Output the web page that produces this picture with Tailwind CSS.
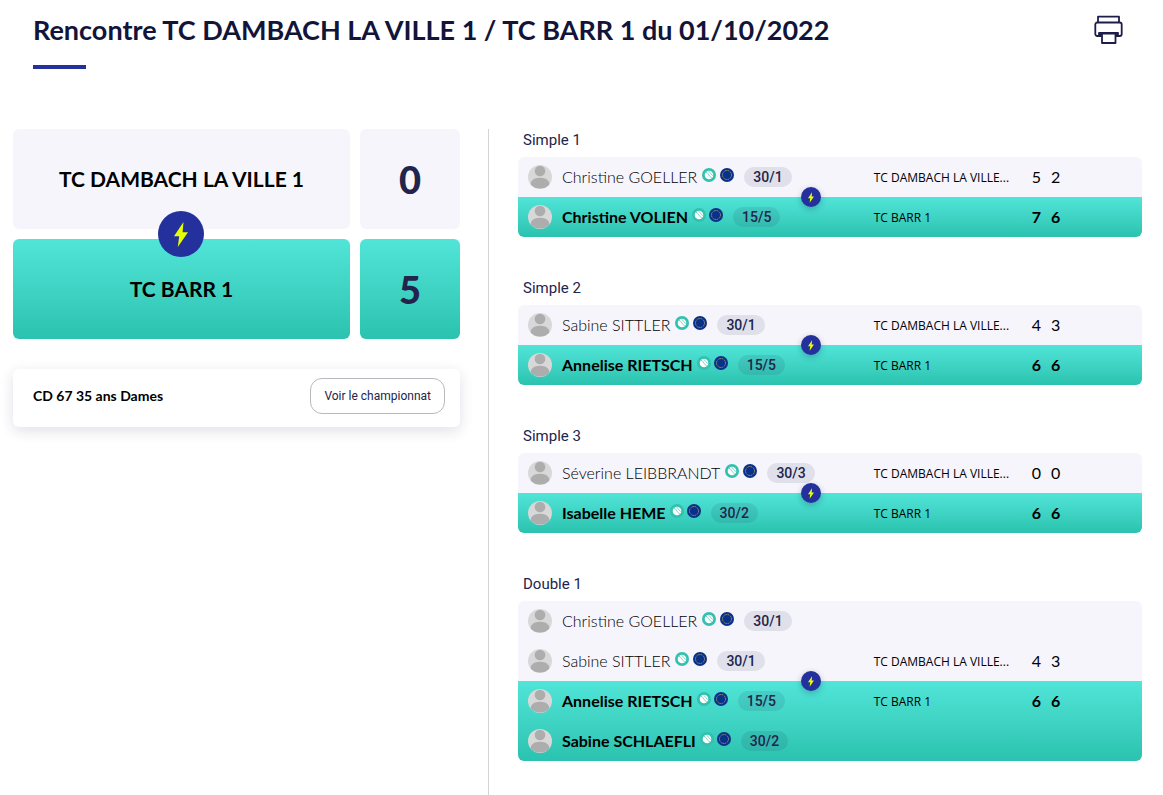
<!DOCTYPE html>
<html lang="fr">
<head>
<meta charset="utf-8">
<meta name="viewport" content="width=device-width, initial-scale=1">
<title>Rencontre TC DAMBACH LA VILLE 1 / TC BARR 1</title>
<script src="https://cdn.jsdelivr.net/npm/@tailwindcss/browser@4"></script>
</head>
<body class="overflow-x-hidden bg-white font-['Lato',sans-serif] text-black">

<svg class="hidden" aria-hidden="true">
  <symbol id="avatar" viewBox="0 0 24 24">
    <rect width="24" height="24" fill="#d8d8d8"/>
    <circle cx="12" cy="6" r="5.300" fill="#adadad"/>
    <path d="M2.500 20c0-4.500 3.500-7.300 9.500-7.300s9.500 2.800 9.500 7.300c-2.500 2.500-6 3.400-9.500 3.400S5 22.500 2.500 20z" fill="#adadad"/>
  </symbol>
  <symbol id="ball" viewBox="0 0 14 14">
    <circle cx="7" cy="7" r="7" fill="#33c0ae"/>
    <circle cx="7" cy="7" r="4.300" fill="#fff"/>
    <path d="M4 4.200c1.800.6 2 1.800 2.800 2.900s2 1.400 2.700 3M6.600 3c.6 1.200 1.500 1.500 2.100 2.500s1.200 1.500 2.100 2" fill="none" stroke="#33c0ae" stroke-width=".7"/>
  </symbol>
  <symbol id="europe" viewBox="0 0 14 14">
    <circle cx="7" cy="7" r="7" fill="#0a3189"/>
    <circle cx="7" cy="7" r="4.500" fill="none" stroke="#8f8f68" stroke-width="1" stroke-dasharray="1.600 .756"/>
  </symbol>
  <symbol id="bolt" viewBox="0 0 14 25">
    <path d="M9.500 0 0 14.200h5.200L3.800 25 14 10.200H8.600L9.500 0z" fill="#e6ff00"/>
  </symbol>
</svg>

<header class="flex items-start justify-between pl-[33px] pr-10 pt-3">
  <div>
    <h1 class="text-[27px] leading-9 font-bold text-[#12143a]">Rencontre TC DAMBACH LA VILLE 1 / TC BARR 1 du 01/10/2022</h1>
    <div class="mt-[17px] h-1 w-[53px] bg-[#24309c]"></div>
  </div>
  <button type="button" aria-label="Imprimer" class="mt-[3px]">
    <svg class="size-[29px]" viewBox="0 0 29 29" fill="none" stroke="#1d1d4b" stroke-width="1.800" stroke-linejoin="round">
      <path d="M4 7.500V1.700h21v5.800"/>
      <path d="M7.500 21H3.300a2 2 0 0 1-2-2V9.500a2 2 0 0 1 2-2h22.400a2 2 0 0 1 2 2V19a2 2 0 0 1-2 2H21"/>
      <path d="M5 18h19v1.500H5z" fill="#1d1d4b"/>
      <path d="M8 18.500h13.500V28H8z" fill="#fff"/>
    </svg>
  </button>
</header>

<main class="ml-[13px] mr-[10px] mt-15 grid grid-cols-[5fr_7fr]">

  <section class="pr-7">
    <div class="relative grid grid-cols-[1fr_100px] grid-rows-[100px_100px] gap-[10px] text-center">
      <div class="flex items-center justify-center rounded-md bg-[#f6f5fc] text-[21px] font-bold">TC DAMBACH LA VILLE 1</div>
      <div class="flex items-center justify-center rounded-md bg-[#f6f5fc] text-[38px] font-black text-[#22244b]">0</div>
      <div class="flex items-center justify-center rounded-md bg-linear-to-b from-[#50e5d8] to-[#2bc2af] text-[21px] font-bold">TC BARR 1</div>
      <div class="flex items-center justify-center rounded-md bg-linear-to-b from-[#50e5d8] to-[#2bc2af] text-[38px] font-black text-[#22244b]">5</div>
      <span class="absolute left-[calc(50%-56px)] top-1/2 flex size-[46px] -translate-x-1/2 -translate-y-1/2 items-center justify-center rounded-full bg-[#24309c]"><svg class="h-[25px] w-[14px]"><use href="#bolt"/></svg></span>
    </div>
    <div class="mt-[30px] flex items-start justify-between rounded-md pt-[9px] pl-5 pr-[15px] pb-[13px] shadow-[0_4px_14px_rgba(34,36,90,0.14)]">
      <p class="py-2 text-sm font-bold">CD 67 35 ans Dames</p>
      <button type="button" class="h-9 rounded-xl border border-[#b9b9bd] px-[13px] font-['Roboto',sans-serif] text-xs text-[#22244b]">Voir le championnat</button>
    </div>
  </section>

  <section class="flex min-h-[666px] flex-col gap-10 border-l border-[#d4d4d8] pl-[29px] pr-[11px]">

    <article>
      <h2 class="mb-[6px] pl-[5px] font-['Roboto',sans-serif] text-[15px] leading-[22px] text-[#22244b]">Simple 1</h2>
      <div class="relative">
        <div class="overflow-hidden rounded-md">
          <table class="w-full table-fixed border-collapse">
            <colgroup><col class="w-[57%]"><col class="w-[25%]"><col></colgroup>
            <tbody class="bg-[#f6f5fc]">
              <tr class="h-10">
                <td class="p-0"><div class="flex items-center pl-[10px] font-light"><svg class="mr-[10px] size-6 rounded-full"><use href="#avatar"/></svg>Christine GOELLER<svg class="mb-1 ml-[5px] size-[14px]"><use href="#ball"/></svg><svg class="mb-1 ml-1 size-[14px]"><use href="#europe"/></svg><span class="ml-[10px] rounded-full bg-[#22244b]/10 px-[9px] font-['Roboto',sans-serif] text-sm font-medium text-[#22244b]">30/1</span></div></td>
                <td class="p-0 pt-[2px] font-['Open_Sans',sans-serif] text-xs">TC DAMBACH LA VILLE...</td>
                <td class="p-0"><div class="flex gap-[10px] pl-[2px] font-normal"><span>5</span><span>2</span></div></td>
              </tr>
            </tbody>
            <tbody class="bg-linear-to-b from-[#50e5d8] to-[#2bc2af]">
              <tr class="h-10">
                <td class="p-0"><div class="flex items-center pl-[10px] font-bold"><svg class="mr-[10px] size-6 rounded-full"><use href="#avatar"/></svg>Christine VOLIEN<svg class="mb-1 ml-1 size-[14px]"><use href="#ball"/></svg><svg class="mb-1 ml-[3px] size-[14px]"><use href="#europe"/></svg><span class="ml-[10px] rounded-full bg-[#22244b]/10 px-[9px] font-['Roboto',sans-serif] text-sm font-medium text-[#22244b]">15/5</span></div></td>
                <td class="p-0 pt-[2px] font-['Open_Sans',sans-serif] text-xs">TC BARR 1</td>
                <td class="p-0"><div class="flex gap-[10px] pl-[2px] font-bold"><span>7</span><span>6</span></div></td>
              </tr>
            </tbody>
          </table>
        </div>
        <span class="absolute left-[47%] top-1/2 flex size-5 -translate-x-1/2 -translate-y-1/2 items-center justify-center rounded-full bg-[#24309c] shadow-[0_2px_6px_rgba(34,36,90,0.3)]"><svg class="h-[11px] w-[6px]"><use href="#bolt"/></svg></span>
      </div>
    </article>

    <article>
      <h2 class="mb-[6px] pl-[5px] font-['Roboto',sans-serif] text-[15px] leading-[22px] text-[#22244b]">Simple 2</h2>
      <div class="relative">
        <div class="overflow-hidden rounded-md">
          <table class="w-full table-fixed border-collapse">
            <colgroup><col class="w-[57%]"><col class="w-[25%]"><col></colgroup>
            <tbody class="bg-[#f6f5fc]">
              <tr class="h-10">
                <td class="p-0"><div class="flex items-center pl-[10px] font-light"><svg class="mr-[10px] size-6 rounded-full"><use href="#avatar"/></svg>Sabine SITTLER<svg class="mb-1 ml-[5px] size-[14px]"><use href="#ball"/></svg><svg class="mb-1 ml-1 size-[14px]"><use href="#europe"/></svg><span class="ml-[10px] rounded-full bg-[#22244b]/10 px-[9px] font-['Roboto',sans-serif] text-sm font-medium text-[#22244b]">30/1</span></div></td>
                <td class="p-0 pt-[2px] font-['Open_Sans',sans-serif] text-xs">TC DAMBACH LA VILLE...</td>
                <td class="p-0"><div class="flex gap-[10px] pl-[2px] font-normal"><span>4</span><span>3</span></div></td>
              </tr>
            </tbody>
            <tbody class="bg-linear-to-b from-[#50e5d8] to-[#2bc2af]">
              <tr class="h-10">
                <td class="p-0"><div class="flex items-center pl-[10px] font-bold"><svg class="mr-[10px] size-6 rounded-full"><use href="#avatar"/></svg>Annelise RIETSCH<svg class="mb-1 ml-1 size-[14px]"><use href="#ball"/></svg><svg class="mb-1 ml-[3px] size-[14px]"><use href="#europe"/></svg><span class="ml-[10px] rounded-full bg-[#22244b]/10 px-[9px] font-['Roboto',sans-serif] text-sm font-medium text-[#22244b]">15/5</span></div></td>
                <td class="p-0 pt-[2px] font-['Open_Sans',sans-serif] text-xs">TC BARR 1</td>
                <td class="p-0"><div class="flex gap-[10px] pl-[2px] font-bold"><span>6</span><span>6</span></div></td>
              </tr>
            </tbody>
          </table>
        </div>
        <span class="absolute left-[47%] top-1/2 flex size-5 -translate-x-1/2 -translate-y-1/2 items-center justify-center rounded-full bg-[#24309c] shadow-[0_2px_6px_rgba(34,36,90,0.3)]"><svg class="h-[11px] w-[6px]"><use href="#bolt"/></svg></span>
      </div>
    </article>

    <article>
      <h2 class="mb-[6px] pl-[5px] font-['Roboto',sans-serif] text-[15px] leading-[22px] text-[#22244b]">Simple 3</h2>
      <div class="relative">
        <div class="overflow-hidden rounded-md">
          <table class="w-full table-fixed border-collapse">
            <colgroup><col class="w-[57%]"><col class="w-[25%]"><col></colgroup>
            <tbody class="bg-[#f6f5fc]">
              <tr class="h-10">
                <td class="p-0"><div class="flex items-center pl-[10px] font-light"><svg class="mr-[10px] size-6 rounded-full"><use href="#avatar"/></svg>Séverine LEIBBRANDT<svg class="mb-1 ml-[5px] size-[14px]"><use href="#ball"/></svg><svg class="mb-1 ml-1 size-[14px]"><use href="#europe"/></svg><span class="ml-[10px] rounded-full bg-[#22244b]/10 px-[9px] font-['Roboto',sans-serif] text-sm font-medium text-[#22244b]">30/3</span></div></td>
                <td class="p-0 pt-[2px] font-['Open_Sans',sans-serif] text-xs">TC DAMBACH LA VILLE...</td>
                <td class="p-0"><div class="flex gap-[10px] pl-[2px] font-normal"><span>0</span><span>0</span></div></td>
              </tr>
            </tbody>
            <tbody class="bg-linear-to-b from-[#50e5d8] to-[#2bc2af]">
              <tr class="h-10">
                <td class="p-0"><div class="flex items-center pl-[10px] font-bold"><svg class="mr-[10px] size-6 rounded-full"><use href="#avatar"/></svg>Isabelle HEME<svg class="mb-1 ml-1 size-[14px]"><use href="#ball"/></svg><svg class="mb-1 ml-[3px] size-[14px]"><use href="#europe"/></svg><span class="ml-[10px] rounded-full bg-[#22244b]/10 px-[9px] font-['Roboto',sans-serif] text-sm font-medium text-[#22244b]">30/2</span></div></td>
                <td class="p-0 pt-[2px] font-['Open_Sans',sans-serif] text-xs">TC BARR 1</td>
                <td class="p-0"><div class="flex gap-[10px] pl-[2px] font-bold"><span>6</span><span>6</span></div></td>
              </tr>
            </tbody>
          </table>
        </div>
        <span class="absolute left-[47%] top-1/2 flex size-5 -translate-x-1/2 -translate-y-1/2 items-center justify-center rounded-full bg-[#24309c] shadow-[0_2px_6px_rgba(34,36,90,0.3)]"><svg class="h-[11px] w-[6px]"><use href="#bolt"/></svg></span>
      </div>
    </article>

    <article>
      <h2 class="mb-[6px] pl-[5px] font-['Roboto',sans-serif] text-[15px] leading-[22px] text-[#22244b]">Double 1</h2>
      <div class="relative">
        <div class="overflow-hidden rounded-md">
          <table class="w-full table-fixed border-collapse">
            <colgroup><col class="w-[57%]"><col class="w-[25%]"><col></colgroup>
            <tbody class="bg-[#f6f5fc]">
              <tr class="h-10">
                <td class="p-0"><div class="flex items-center pl-[10px] font-light"><svg class="mr-[10px] size-6 rounded-full"><use href="#avatar"/></svg>Christine GOELLER<svg class="mb-1 ml-[5px] size-[14px]"><use href="#ball"/></svg><svg class="mb-1 ml-1 size-[14px]"><use href="#europe"/></svg><span class="ml-[10px] rounded-full bg-[#22244b]/10 px-[9px] font-['Roboto',sans-serif] text-sm font-medium text-[#22244b]">30/1</span></div></td>
                <td></td>
                <td></td>
              </tr>
              <tr class="h-10">
                <td class="p-0"><div class="flex items-center pl-[10px] font-light"><svg class="mr-[10px] size-6 rounded-full"><use href="#avatar"/></svg>Sabine SITTLER<svg class="mb-1 ml-[5px] size-[14px]"><use href="#ball"/></svg><svg class="mb-1 ml-1 size-[14px]"><use href="#europe"/></svg><span class="ml-[10px] rounded-full bg-[#22244b]/10 px-[9px] font-['Roboto',sans-serif] text-sm font-medium text-[#22244b]">30/1</span></div></td>
                <td class="p-0 pt-[2px] font-['Open_Sans',sans-serif] text-xs">TC DAMBACH LA VILLE...</td>
                <td class="p-0"><div class="flex gap-[10px] pl-[2px] font-normal"><span>4</span><span>3</span></div></td>
              </tr>
            </tbody>
            <tbody class="bg-linear-to-b from-[#50e5d8] to-[#2bc2af]">
              <tr class="h-10">
                <td class="p-0"><div class="flex items-center pl-[10px] font-bold"><svg class="mr-[10px] size-6 rounded-full"><use href="#avatar"/></svg>Annelise RIETSCH<svg class="mb-1 ml-1 size-[14px]"><use href="#ball"/></svg><svg class="mb-1 ml-[3px] size-[14px]"><use href="#europe"/></svg><span class="ml-[10px] rounded-full bg-[#22244b]/10 px-[9px] font-['Roboto',sans-serif] text-sm font-medium text-[#22244b]">15/5</span></div></td>
                <td class="p-0 pt-[2px] font-['Open_Sans',sans-serif] text-xs">TC BARR 1</td>
                <td class="p-0"><div class="flex gap-[10px] pl-[2px] font-bold"><span>6</span><span>6</span></div></td>
              </tr>
              <tr class="h-10">
                <td class="p-0"><div class="flex items-center pl-[10px] font-bold"><svg class="mr-[10px] size-6 rounded-full"><use href="#avatar"/></svg>Sabine SCHLAEFLI<svg class="mb-1 ml-1 size-[14px]"><use href="#ball"/></svg><svg class="mb-1 ml-[3px] size-[14px]"><use href="#europe"/></svg><span class="ml-[10px] rounded-full bg-[#22244b]/10 px-[9px] font-['Roboto',sans-serif] text-sm font-medium text-[#22244b]">30/2</span></div></td>
                <td></td>
                <td></td>
              </tr>
            </tbody>
          </table>
        </div>
        <span class="absolute left-[47%] top-1/2 flex size-5 -translate-x-1/2 -translate-y-1/2 items-center justify-center rounded-full bg-[#24309c] shadow-[0_2px_6px_rgba(34,36,90,0.3)]"><svg class="h-[11px] w-[6px]"><use href="#bolt"/></svg></span>
      </div>
    </article>

  </section>
</main>
</body>
</html>
